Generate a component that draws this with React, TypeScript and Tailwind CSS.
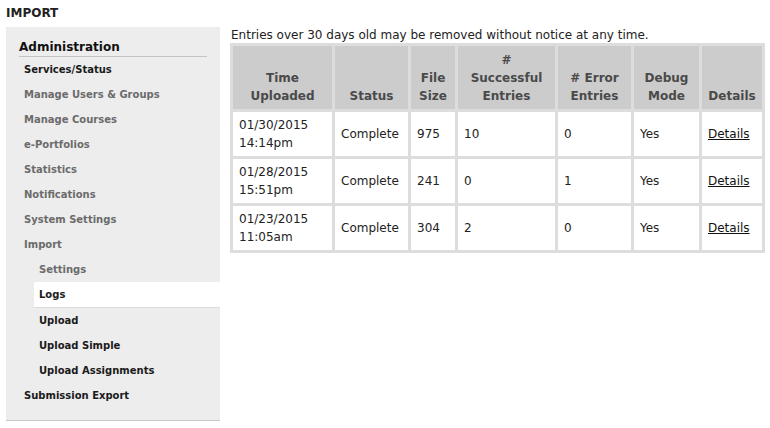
import React from 'react';

const menu = [
  { label: 'Services/Status', tone: 'dark' },
  { label: 'Manage Users & Groups', tone: 'muted' },
  { label: 'Manage Courses', tone: 'muted' },
  { label: 'e-Portfolios', tone: 'muted' },
  { label: 'Statistics', tone: 'muted' },
  { label: 'Notifications', tone: 'muted' },
  { label: 'System Settings', tone: 'muted' },
  { label: 'Import', tone: 'muted' },
  { label: 'Settings', tone: 'muted', sub: true },
  { label: 'Logs', tone: 'dark', sub: true, active: true },
  { label: 'Upload', tone: 'dark', sub: true },
  { label: 'Upload Simple', tone: 'dark', sub: true },
  { label: 'Upload Assignments', tone: 'dark', sub: true },
  { label: 'Submission Export', tone: 'dark' },
];

const logs = [
  { date: '01/30/2015', time: '14:14pm', status: 'Complete', size: '975', ok: '10', err: '0', debug: 'Yes' },
  { date: '01/28/2015', time: '15:51pm', status: 'Complete', size: '241', ok: '0', err: '1', debug: 'Yes' },
  { date: '01/23/2015', time: '11:05am', status: 'Complete', size: '304', ok: '2', err: '0', debug: 'Yes' },
];

const Sidebar = () => (
  <div className="w-[214px] bg-[#ededed] border-b border-[#c8c8c8] pt-[10px] h-[394px]">
    <div className="ml-[13px] mr-[13px] h-[20px] border-b border-[#c4c4c4] text-[12px] font-bold text-[#111] leading-[18px] pt-[1px]">
      Administration
    </div>
    <ul>
      {menu.map((item) => (
        <li
          key={item.label}
          className={`flex items-center text-[10px] font-bold ${
            item.sub ? 'ml-[28px] pl-[5px]' : 'pl-[18px]'
          } ${item.active ? 'h-[26px] bg-white border-b border-[#dcdcdc]' : 'h-[25px]'} ${
            item.tone === 'dark' ? 'text-[#1a1a1a]' : 'text-[#6b6b6b]'
          }`}
        >
          {item.label}
        </li>
      ))}
    </ul>
  </div>
);

const th = 'bg-[#cccccc] text-[#4a4a4a] font-bold text-center align-bottom px-[4px] pb-[4px] leading-[18px]';
const td = 'bg-white align-middle px-[6px] py-[4px] leading-[18px]';

const LogTable = () => (
  <table className="border-separate border-spacing-[3px] bg-[#dddddd] text-[12px] text-[#222] w-[535px] table-fixed">
    <colgroup>
      <col className="w-[99px]" />
      <col className="w-[73px]" />
      <col className="w-[44px]" />
      <col className="w-[97px]" />
      <col className="w-[73px]" />
      <col className="w-[65px]" />
      <col className="w-[60px]" />
    </colgroup>
    <thead>
      <tr className="h-[63px]">
        <th className={th}>Time<br />Uploaded</th>
        <th className={th}>Status</th>
        <th className={th}>File<br />Size</th>
        <th className={th}>#<br />Successful<br />Entries</th>
        <th className={th}># Error<br />Entries</th>
        <th className={th}>Debug<br />Mode</th>
        <th className={th}>Details</th>
      </tr>
    </thead>
    <tbody>
      {logs.map((r) => (
        <tr key={r.date} className="h-[44px]">
          <td className={td}>{r.date}<br />{r.time}</td>
          <td className={td}>{r.status}</td>
          <td className={td}>{r.size}</td>
          <td className={td}>{r.ok}</td>
          <td className={td}>{r.err}</td>
          <td className={td}>{r.debug}</td>
          <td className={td}>
            <a href="#" className="underline text-[#111]">Details</a>
          </td>
        </tr>
      ))}
    </tbody>
  </table>
);

export default function App() {
  return (
    <div className="w-[770px] h-[428px] bg-white font-['DejaVu_Sans','Verdana',sans-serif] overflow-hidden">
      <div className="pl-[6px] pt-[5px] h-[27px] text-[12px] font-bold text-[#222] leading-[16px]">IMPORT</div>
      <div className="flex pl-[6px]">
        <Sidebar />
        <div className="ml-[10px] flex flex-col">
          <p className="text-[12px] text-[#222] leading-[16px] mt-[0px] h-[16px] ml-[1px]">
            Entries over 30 days old may be removed without notice at any time.
          </p>
          <LogTable />
        </div>
      </div>
    </div>
  );
}
